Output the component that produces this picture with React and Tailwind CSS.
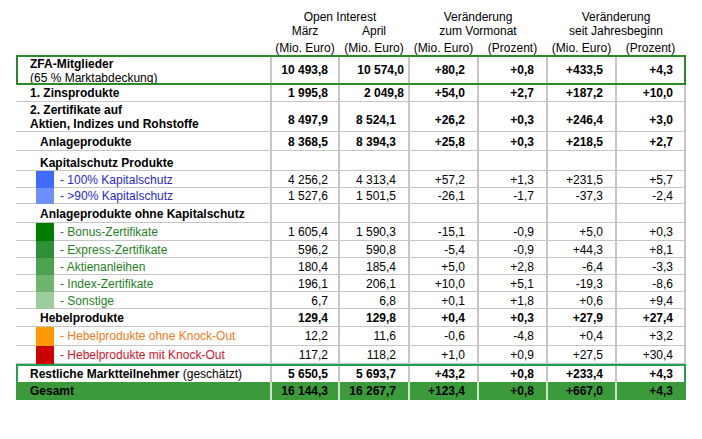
import React from "react";

const LINE = "border-[#c6c6c6]";
const COLS = [
  "w-[68px] pr-[10px]",
  "w-[70px] pr-3",
  "w-[69px] pr-3",
  "w-[69px] pr-3",
  "w-[69px] pr-3",
  "w-[69px] pr-[11px]",
];
const COLS_TOP = [
  "w-[68px] pr-[10px]",
  "w-[70px] pr-1",
  "w-[69px] pr-3",
  "w-[69px] pr-3",
  "w-[69px] pr-3",
  "w-[69px] pr-[11px]",
];
const EMPTY = ["", "", "", "", "", ""];

function Cells({ vals, bold, align = "items-end pb-px", cols = COLS, line = LINE }) {
  return vals.map((v, i) => (
    <div
      key={i}
      className={`${cols[i]} shrink-0 border-l-2 ${line} flex justify-end ${align} ${bold ? "font-bold" : ""}`}
    >
      <span className="whitespace-pre">{v}</span>
    </div>
  ));
}

function Row({ h, children, vals = EMPTY, bold, align, cols }) {
  return (
    <div className={`flex ${h} border-b border-r-2 ${LINE}`}>
      {children}
      <Cells vals={vals} bold={bold} align={align} cols={cols} />
    </div>
  );
}

function PlainLabel({ text, pl = "pl-[14px]", pb = "pb-px", bold = true }) {
  return (
    <div className={`w-[254px] shrink-0 flex items-end ${pl} ${pb} ${bold ? "font-bold" : ""}`}>
      <span className="whitespace-pre">{text}</span>
    </div>
  );
}

function SquareLabel({ text, sq, tc, mb = "mb-0" }) {
  return (
    <div className="w-[254px] shrink-0 flex items-end pl-5">
      <div className={`w-[18px] self-stretch -mb-px relative ${sq}`} />
      <span className={`ml-[6px] whitespace-pre ${tc} ${mb}`}>{text}</span>
    </div>
  );
}

export default function App() {
  return (
    <div className="w-[702px] h-[439px] bg-white text-black text-[12px] leading-[14px] font-['Liberation_Sans',Arial,sans-serif] overflow-hidden">
      <div className="ml-4 w-[670px]">
        {/* Header */}
        <div className="pt-[10px]">
          <div className="flex">
            <div className="w-[254px] shrink-0" />
            <div className="w-[138px] pl-[2px] text-center">Open Interest</div>
            <div className="w-[138px] pl-[2px] text-center">Veränderung</div>
            <div className="w-[138px] pl-[2px] text-center">Veränderung</div>
          </div>
          <div className="flex">
            <div className="w-[254px] shrink-0" />
            <div className="w-[68px] pl-[2px] text-center">März</div>
            <div className="w-[70px] pl-[2px] text-center">April</div>
            <div className="w-[138px] pl-[2px] text-center">zum Vormonat</div>
            <div className="w-[138px] pl-[2px] text-center">seit Jahresbeginn</div>
          </div>
          <div className="flex mt-[3px]">
            <div className="w-[254px] shrink-0" />
            <div className="w-[68px] pl-[2px] text-center whitespace-pre">(Mio. Euro)</div>
            <div className="w-[70px] pl-[2px] text-center whitespace-pre">(Mio. Euro)</div>
            <div className="w-[69px] pl-[2px] text-center whitespace-pre">(Mio. Euro)</div>
            <div className="w-[69px] pl-[2px] text-center whitespace-pre">(Prozent)</div>
            <div className="w-[69px] pl-[2px] text-center whitespace-pre">(Mio. Euro)</div>
            <div className="w-[69px] pl-[2px] text-center whitespace-pre">(Prozent)</div>
          </div>
        </div>

        {/* ZFA box */}
        <div className="flex h-[30px] border-2 border-[#2a8a2a] overflow-hidden">
          <div className="w-[252px] shrink-0 pl-3">
            <div className="font-bold">ZFA-Mitglieder</div>
            <div className="whitespace-pre">(65 % Marktabdeckung)</div>
          </div>
          <Cells
            vals={["10 493,8", "10 574,0", "+80,2", "+0,8", "+433,5", "+4,3"]}
            bold
            align="items-center"
            cols={COLS_TOP}
          />
        </div>

        <Row h="h-[17px]" vals={["1 995,8", "2 049,8", "+54,0", "+2,7", "+187,2", "+10,0"]} bold cols={COLS_TOP}>
          <PlainLabel text="1. Zinsprodukte" />
        </Row>

        <Row h="h-[30px]" vals={["8 497,9", "8 524,1", "+26,2", "+0,3", "+246,4", "+3,0"]} bold align="items-end pb-[4px]">
          <div className="w-[254px] shrink-0 flex flex-col justify-end pl-[14px] font-bold">
            <div>2. Zertifikate auf</div>
            <div>Aktien, Indizes und Rohstoffe</div>
          </div>
        </Row>

        <Row h="h-[19px]" vals={["8 368,5", "8 394,3", "+25,8", "+0,3", "+218,5", "+2,7"]} bold>
          <PlainLabel text="Anlageprodukte" pl="pl-6" />
        </Row>

        <Row h="h-[20px]">
          <PlainLabel text="Kapitalschutz Produkte" pl="pl-6" pb="pb-0" />
        </Row>

        <Row h="h-[17px]" vals={["4 256,2", "4 313,4", "+57,2", "+1,3", "+231,5", "+5,7"]} align="items-end pb-0">
          <SquareLabel text="- 100% Kapitalschutz" sq="bg-[#3f6bff]" tc="text-[#2828cc]" />
        </Row>
        <Row h="h-[16px]" vals={["1 527,6", "1 501,5", "-26,1", "-1,7", "-37,3", "-2,4"]} align="items-end pb-0">
          <SquareLabel text="- >90% Kapitalschutz" sq="bg-[#6d8fff]" tc="text-[#2828cc]" />
        </Row>

        <Row h="h-[19px]">
          <PlainLabel text="Anlageprodukte ohne Kapitalschutz" pl="pl-6" />
        </Row>

        <Row h="h-[18px]" vals={["1 605,4", "1 590,3", "-15,1", "-0,9", "+5,0", "+0,3"]} align="items-end pb-px">
          <SquareLabel text="- Bonus-Zertifikate" sq="bg-[#007c00]" tc="text-[#1f7f1f]" mb="mb-px" />
        </Row>
        <Row h="h-[17px]" vals={["596,2", "590,8", "-5,4", "-0,9", "+44,3", "+8,1"]} align="items-end pb-0">
          <SquareLabel text="- Express-Zertifikate" sq="bg-[#2f8f36]" tc="text-[#1f7f1f]" />
        </Row>
        <Row h="h-[17px]" vals={["180,4", "185,4", "+5,0", "+2,8", "-6,4", "-3,3"]} align="items-end pb-0">
          <SquareLabel text="- Aktienanleihen" sq="bg-[#4ca24f]" tc="text-[#1f7f1f]" />
        </Row>
        <Row h="h-[17px]" vals={["196,1", "206,1", "+10,0", "+5,1", "-19,3", "-8,6"]} align="items-end pb-0">
          <SquareLabel text="- Index-Zertifikate" sq="bg-[#6eb670]" tc="text-[#1f7f1f]" />
        </Row>
        <Row h="h-[17px]" vals={["6,7", "6,8", "+0,1", "+1,8", "+0,6", "+9,4"]} align="items-end pb-0">
          <SquareLabel text="- Sonstige" sq="bg-[#9ccd9c]" tc="text-[#1f7f1f]" />
        </Row>

        <Row h="h-[18px]" vals={["129,4", "129,8", "+0,4", "+0,3", "+27,9", "+27,4"]} bold>
          <PlainLabel text="Hebelprodukte" pl="pl-6" />
        </Row>

        <Row h="h-[19px]" vals={["12,2", "11,6", "-0,6", "-4,8", "+0,4", "+3,2"]} align="items-end pb-[2px]">
          <SquareLabel text="- Hebelprodukte ohne Knock-Out" sq="bg-[#ff9900]" tc="text-[#f27a22]" mb="mb-[2px]" />
        </Row>
        <Row h="h-[18px]" vals={["117,2", "118,2", "+1,0", "+0,9", "+27,5", "+30,4"]} align="items-end pb-px">
          <SquareLabel text="- Hebelprodukte mit Knock-Out" sq="bg-[#cc0000]" tc="text-[#d4122a]" mb="mb-px" />
        </Row>

        {/* Restliche box */}
        <div className="flex h-[18px] border-t-2 border-x-2 border-[#1fa055]">
          <div className="w-[252px] shrink-0 flex items-end pl-3 pb-px">
            <span className="whitespace-pre">
              <span className="font-bold">Restliche Marktteilnehmer</span> (geschätzt)
            </span>
          </div>
          <Cells vals={["5 650,5", "5 693,7", "+43,2", "+0,8", "+233,4", "+4,3"]} bold />
        </div>

        {/* Gesamt */}
        <div className="flex h-[18px] bg-[#3b9b3b] border-r-2 border-[#3b9b3b]">
          <div className="w-[254px] shrink-0 flex items-end pl-[14px] pb-[2px] font-bold">Gesamt</div>
          <Cells
            vals={["16 144,3", "16 267,7", "+123,4", "+0,8", "+667,0", "+4,3"]}
            bold
            align="items-end pb-[2px]"
            line="border-[#cfe0cf]"
          />
        </div>
      </div>
    </div>
  );
}
